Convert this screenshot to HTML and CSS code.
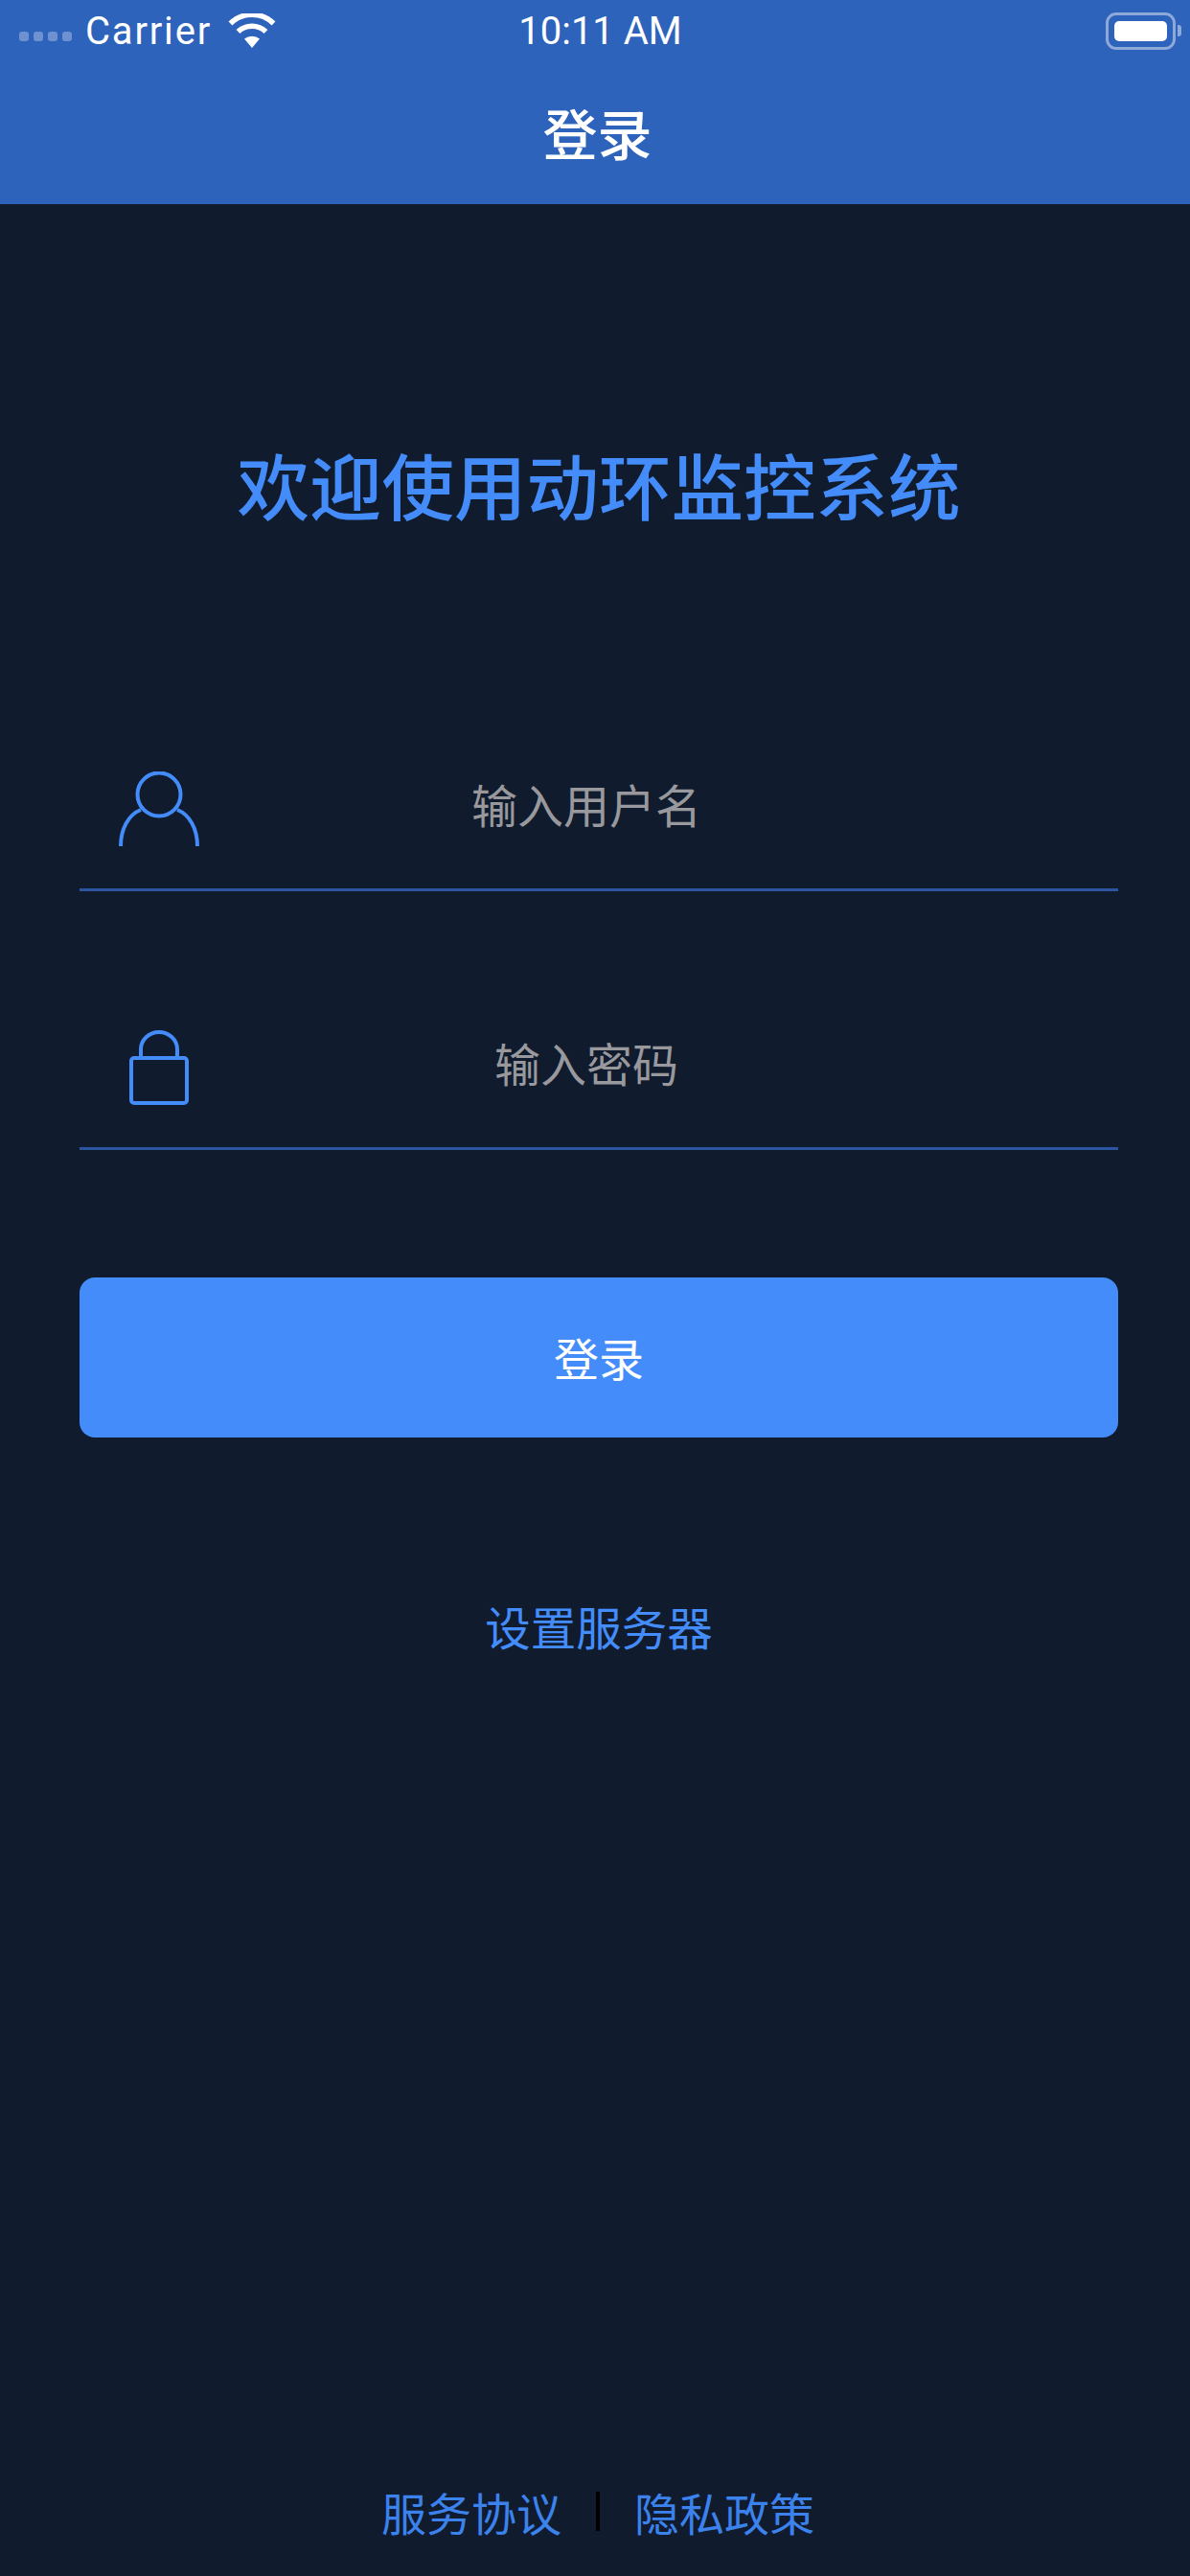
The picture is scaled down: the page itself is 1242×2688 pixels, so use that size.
FILE: index.html
```html
<!DOCTYPE html>
<html lang="zh-CN">
  <head>
    <meta charset="UTF-8" />
    <meta name="viewport" content="width=device-width, initial-scale=1.0" />
    <title>登录</title>
    <link rel="stylesheet" href="styles.css">
  </head>
  <body>
    <div class="app">
      <header class="top">
        <div class="status">
          <div class="status-left">
            <span class="signal"><i></i><i></i><i></i><i></i></span>
            <span class="carrier">Carrier</span>
            <svg class="wifi" viewBox="0 0 50 36" width="50" height="36">
              <path d="M25 36 L17 26.5 A13 13 0 0 1 33 26.5 Z" fill="#fff" />
              <path d="M10.5 19 A21 21 0 0 1 39.5 19" fill="none" stroke="#fff" stroke-width="5.5" />
              <path d="M2.5 10.5 A32 32 0 0 1 47.5 10.5" fill="none" stroke="#fff" stroke-width="5.5" />
            </svg>
          </div>
          <span class="time">10:11 AM</span>
          <div class="status-right">
            <div class="battery"><span class="battery-fill"></span><span class="battery-nub"></span></div>
          </div>
        </div>
        <h1 class="nav-title">登录</h1>
      </header>

      <main class="content">
        <h2 class="welcome">欢迎使用动环监控系统</h2>

        <div class="field">
          <div class="field-icon">
            <svg viewBox="0 0 84 78" width="84" height="78">
              <circle cx="42" cy="24" r="22.5" fill="none" stroke="#448cf9" stroke-width="4" />
              <path d="M23 40 C10 45 2 60 2 78" fill="none" stroke="#448cf9" stroke-width="4" />
              <path d="M61 40 C74 45 82 60 82 78" fill="none" stroke="#448cf9" stroke-width="4" />
            </svg>
          </div>
          <div class="field-hint">输入用户名</div>
        </div>

        <div class="field">
          <div class="field-icon">
            <svg viewBox="0 0 62 78" width="62" height="78">
              <path d="M12 29 V20 A19 18 0 0 1 50 20 V29" fill="none" stroke="#448cf9" stroke-width="4" />
              <rect x="2" y="29" width="58" height="47" rx="3" fill="none" stroke="#448cf9" stroke-width="4" />
            </svg>
          </div>
          <div class="field-hint">输入密码</div>
        </div>

        <button class="login-btn">登录</button>
        <a class="server-link">设置服务器</a>
      </main>

      <footer class="bottom">
        <a>服务协议</a>
        <span class="sep"></span>
        <a>隐私政策</a>
      </footer>
    </div>
  </body>
</html>
```

FILE: styles.css
```css
* {
  box-sizing: border-box;
}
body {
  margin: 0;
  background: #101b2e;
  font-family: "Noto Sans CJK SC", "Noto Sans", sans-serif;
}
.app {
  display: flex;
  flex-direction: column;
  height: 2688px;
  overflow: hidden;
}
.top {
  height: 213px;
  background: #2e63bb;
  color: white;
}
.status {
  display: flex;
  align-items: center;
  height: 64px;
  padding: 0 9px 0 20px;
  font-family: Roboto, "Liberation Sans", sans-serif;
  font-size: 40px;
}
.status-left {
  display: flex;
  flex: 1;
  align-items: center;
}
.status-right {
  display: flex;
  flex: 1;
  justify-content: flex-end;
}
.signal {
  display: flex;
  gap: 5px;
  margin-top: 12px;
  margin-right: 14px;
}
.signal i {
  display: block;
  width: 10px;
  height: 10px;
  border-radius: 3px;
  background: rgba(255, 255, 255, 0.3);
}
.carrier {
  letter-spacing: 1.8px;
}
.wifi {
  margin-left: 17px;
}
.battery {
  display: flex;
  align-items: center;
  position: relative;
  width: 73px;
  height: 39px;
  margin-right: 6px;
  padding: 6px;
  border: 3px solid rgba(255, 255, 255, 0.45);
  border-radius: 11px;
}
.battery-fill {
  display: block;
  width: 100%;
  height: 100%;
  background: white;
  border-radius: 5px;
}
.battery-nub {
  position: absolute;
  right: -9px;
  top: 10px;
  width: 4px;
  height: 12px;
  background: rgba(255, 255, 255, 0.45);
  border-radius: 0 3px 3px 0;
}
.nav-title {
  margin: 0;
  height: 149px;
  padding-left: 5px;
  line-height: 146px;
  text-align: center;
  font-size: 57px;
  font-weight: 500;
}
.content {
  display: flex;
  flex-direction: column;
  padding: 0 75px 0 83px;
}
.welcome {
  margin: 0;
  padding-top: 241px;
  height: 547px;
  line-height: 100px;
  text-align: center;
  font-size: 75.5px;
  font-weight: 500;
  color: #448cf9;
}
.field {
  display: flex;
  align-items: center;
  height: 170px;
  margin-bottom: 100px;
  border-bottom: 3px solid #2b569f;
}
.field-icon {
  display: flex;
  justify-content: center;
  width: 166px;
}
.field-hint {
  width: 726px;
  padding-bottom: 12px;
  text-align: center;
  font-size: 48px;
  color: #99999d;
}
.login-btn {
  height: 167px;
  margin-top: 33px;
  padding: 0 0 3px;
  background: #448cf9;
  color: white;
  border: none;
  border-radius: 16px;
  font-family: inherit;
  font-size: 47px;
}
.server-link {
  margin-top: 162px;
  text-align: center;
  font-size: 47.5px;
  color: #448cf9;
}
.bottom {
  display: flex;
  justify-content: center;
  align-items: center;
  gap: 36px;
  margin-top: auto;
  padding: 0 0 33px 6px;
  font-size: 47px;
  color: #3c82ec;
}
.sep {
  width: 4px;
  height: 41px;
  background: #000;
}
```
